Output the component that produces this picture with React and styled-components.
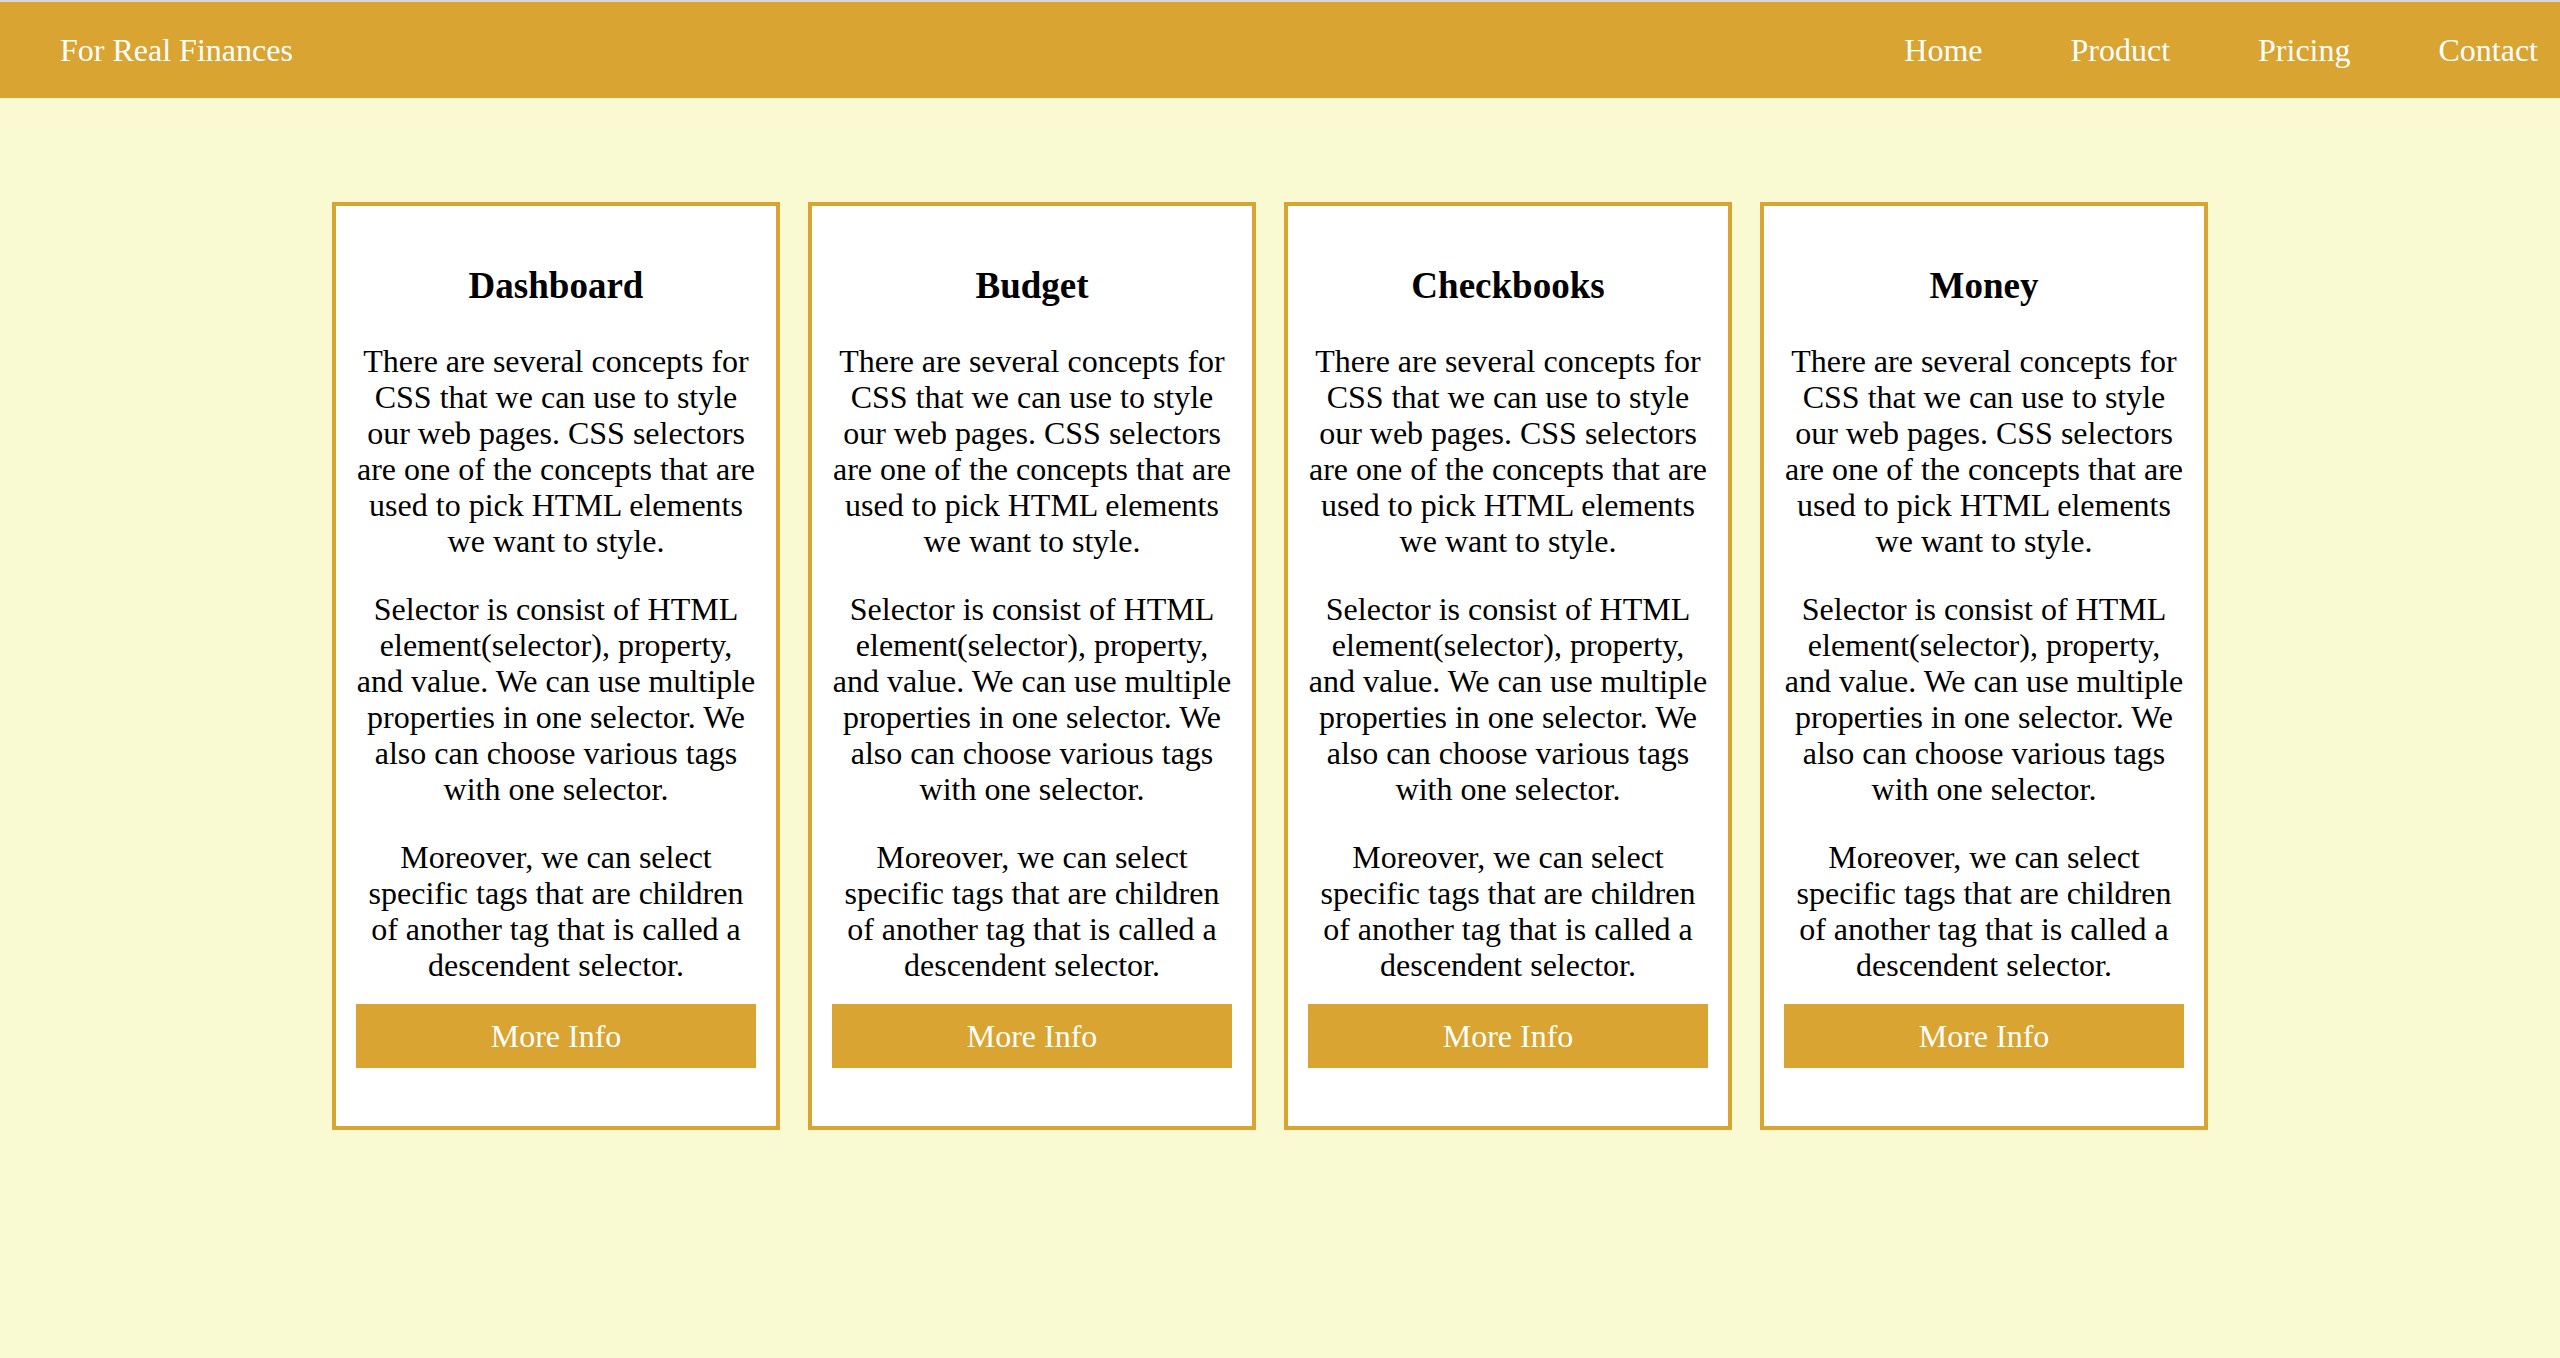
import React from "react";
import styled, { createGlobalStyle } from "styled-components";

const GlobalStyle = createGlobalStyle`
  body {
    margin: 0;
    background-color: #fafad2;
    font-family: "Liberation Serif", "Times New Roman", serif;
  }
`;

const Header = styled.header`
  height: 96px;
  border-top: 2px solid #d6d6d6;
  background-color: #d9a432;
  display: flex;
  align-items: center;
  justify-content: space-between;
  padding: 0 22px 0 60px;
`;

const Logo = styled.a`
  color: white;
  font-size: 32px;
  text-decoration: none;
  cursor: pointer;
`;

const Nav = styled.nav`
  display: flex;
  gap: 88px;
`;

const NavLink = styled.a`
  color: white;
  font-size: 32px;
  text-decoration: none;
  cursor: pointer;
`;

const Cards = styled.main`
  display: flex;
  justify-content: center;
  gap: 28px;
  padding: 104px 20px 0 0;
`;

const Card = styled.section`
  width: 400px;
  border: 4px solid #d9a432;
  background-color: white;
  padding: 58px 20px;
  display: flex;
  flex-direction: column;
  text-align: center;
`;

const Title = styled.h2`
  font-size: 37px;
  line-height: 43px;
  font-weight: bold;
  margin: 0 0 36px;
`;

const Text = styled.p`
  font-size: 32px;
  line-height: 36px;
  margin: 0 0 32px;
  color: black;

  &:last-of-type {
    margin-bottom: 21px;
  }
`;

const Button = styled.button`
  width: 100%;
  height: 64px;
  border: none;
  background-color: #d9a432;
  color: white;
  font-family: inherit;
  font-size: 32px;
  cursor: pointer;
`;

const titles = ["Dashboard", "Budget", "Checkbooks", "Money"];

const App = () => {
  return (
    <>
      <GlobalStyle />
      <Header>
        <Logo>For Real Finances</Logo>
        <Nav>
          <NavLink>Home</NavLink>
          <NavLink>Product</NavLink>
          <NavLink>Pricing</NavLink>
          <NavLink>Contact</NavLink>
        </Nav>
      </Header>
      <Cards>
        {titles.map((title) => (
          <Card key={title}>
            <Title>{title}</Title>
            <Text>
              There are several concepts for CSS that we can use to style our
              web pages. CSS selectors are one of the concepts that are used to
              pick HTML elements we want to style.
            </Text>
            <Text>
              Selector is consist of HTML element(selector), property, and
              value. We can use multiple properties in one selector. We also can
              choose various tags with one selector.
            </Text>
            <Text>
              Moreover, we can select specific tags that are children of
              another tag that is called a descendent selector.
            </Text>
            <Button>More Info</Button>
          </Card>
        ))}
      </Cards>
    </>
  );
};

export default App;
